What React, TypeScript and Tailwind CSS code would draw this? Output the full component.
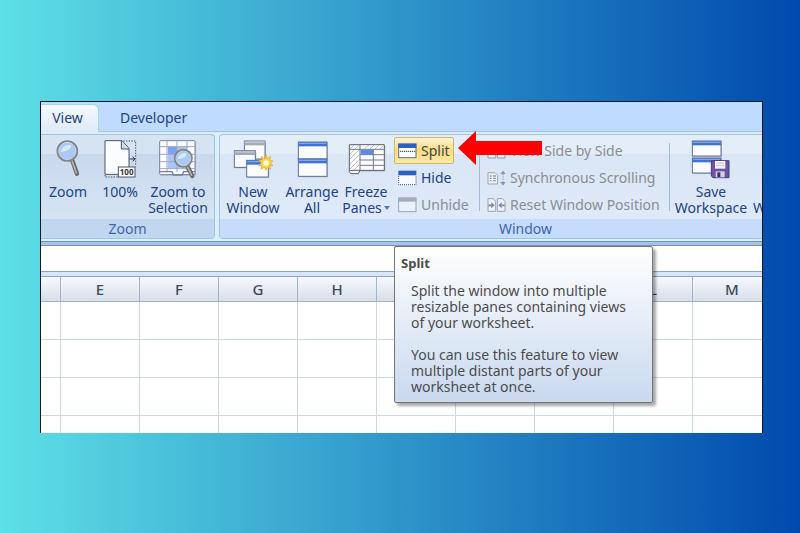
import React from 'react';

const columns = ['', 'E', 'F', 'G', 'H', 'I', 'J', 'K', 'L', 'M'];
const rows = [21, 22, 23, 24];

/* ---------- Icons ---------- */

function Lens({ cx, cy, r, hx, hy }: { cx: number; cy: number; r: number; hx: number; hy: number }) {
  const sx = cx + r * 0.5;
  const sy = cy + r * 0.95;
  return (
    <g>
      <line x1={sx} y1={sy} x2={hx} y2={hy} stroke="#6b6a6c" strokeWidth="13" strokeLinecap="round" />
      <line x1={sx - 1} y1={sy} x2={hx - 2} y2={hy - 2} stroke="#b5b2b0" strokeWidth="5" strokeLinecap="round" />
      <circle cx={cx} cy={cy} r={r} fill="#a9cbf3" stroke="#7f848e" strokeWidth="7" />
      <circle cx={cx} cy={cy} r={r - 3} fill="none" stroke="#cfd5de" strokeWidth="3" />
      <path
        d={`M${cx - r * 0.7} ${cy + r * 0.1} Q${cx - r * 0.5} ${cy - r * 0.7} ${cx + r * 0.4} ${cy - r * 0.6} Q${cx + r * 0.4} ${cy} ${cx - r * 0.7} ${cy + r * 0.1}Z`}
        fill="#d9e9fb"
      />
    </g>
  );
}

function Pane({ x, y, w, h, color = '#3f74d1', bar = 13 }: { x: number; y: number; w: number; h: number; color?: string; bar?: number }) {
  return (
    <g>
      <rect x={x + 3} y={y + 3} width={w} height={h} fill="#8f9bb0" opacity="0.5" />
      <rect x={x} y={y} width={w} height={h} fill="#fbfcff" stroke="#5f6f8c" strokeWidth="3" />
      <rect x={x} y={y} width={w} height={bar} fill={color} />
      <rect x={x + 2} y={y + 2} width={w - 4} height="4" fill="#ffffff" opacity="0.35" />
    </g>
  );
}

function BigIcon({ children }: { children: React.ReactNode }) {
  return (
    <svg viewBox="0 0 120 120" className="h-10 w-10 shrink-0" aria-hidden="true">
      {children}
    </svg>
  );
}

function ZoomIcon() {
  return (
    <BigIcon>
      <Lens cx={58} cy={36} r={29} hx={87} hy={104} />
    </BigIcon>
  );
}

function HundredIcon() {
  return (
    <BigIcon>
      <path d="M15 5H66L87 28V106H15Z" fill="#fbfcff" stroke="#4d5563" strokeWidth="3" />
      <path d="M64 5V30H87" fill="#cfd9e8" stroke="#4d5563" strokeWidth="3" />
      <path d="M70 6H107V82M15 108V114H55" fill="none" stroke="#47505f" strokeWidth="3" strokeDasharray="4 4" />
      <path d="M88 60H104M98 53L105 60L98 67" fill="none" stroke="#333b49" strokeWidth="3" />
      <rect x="55" y="84" width="50" height="30" fill="#ffffff" stroke="#4d5563" strokeWidth="3" />
      <text x="80" y="108" textAnchor="middle" fontSize="24" fontWeight="700" fill="#333333" fontFamily="Noto Sans, sans-serif">
        100
      </text>
    </BigIcon>
  );
}

function ZoomSelectionIcon() {
  return (
    <BigIcon>
      <rect x="8" y="8" width="106" height="102" fill="#8f9bb0" opacity="0.5" />
      <rect x="5" y="5" width="106" height="102" rx="3" fill="#fdfdff" stroke="#77829a" strokeWidth="3" />
      <rect x="30" y="23" width="57" height="66" fill="#a9c5f5" />
      <rect x="30" y="23" width="27" height="22" fill="#7fa3ea" />
      <path d="M27 5V100M57 5V100M87 5V100M5 23H111M5 46H111M5 68H111M5 89H111" stroke="#97a9cb" strokeWidth="3" />
      <path d="M5 98H42L47 108H72L77 98H111" fill="none" stroke="#77829a" strokeWidth="4" />
      <Lens cx={76} cy={58} r={25} hx={103} hy={111} />
    </BigIcon>
  );
}

function NewWindowIcon() {
  return (
    <BigIcon>
      <Pane x={34} y={6} w={62} h={54} color="#a3abb9" />
      <Pane x={4} y={35} w={63} h={50} color="#a3abb9" />
      <Pane x={41} y={64} w={65} h={50} />
      <path
        d="M99 47L103 60L112 52L110 64L120 66L112 72L120 80L110 80L113 91L103 84L99 94L94 84L84 91L87 80L77 80L85 72L77 63L88 63L85 52L95 60Z"
        fill="#fdd94a"
        stroke="#e0a21b"
        strokeWidth="2"
      />
      <circle cx="99" cy="72" r="8" fill="#fffbe0" />
    </BigIcon>
  );
}

function ArrangeIcon() {
  return (
    <BigIcon>
      <Pane x={19} y={9} w={86} h={51} />
      <Pane x={19} y={60} w={86} h={52} />
    </BigIcon>
  );
}

function FreezeIcon() {
  return (
    <BigIcon>
      <rect x="12" y="20" width="106" height="78" fill="#8f9bb0" opacity="0.5" />
      <path d="M10 17H115V94H42L37 104H14L10 98Z" fill="#fdfdff" stroke="#59616e" strokeWidth="3" />
      <path
        d="M12 30L24 18M12 45L39 18M12 60L42 30M12 75L41 46M12 90L41 61M20 97L41 76M55 30L69 18M72 30L84 18M87 30L99 18M102 30L113 19"
        stroke="#9aa2b1"
        strokeWidth="2"
      />
      <path d="M42 31H115M42 47H115M42 63H115M42 79H115M42 17V94M82 31V94M10 31H42" stroke="#727b8b" strokeWidth="3" />
      <rect x="44" y="33" width="37" height="14" fill="#5f8ae0" />
      <path d="M12 94H42" stroke="#59616e" strokeWidth="3" />
    </BigIcon>
  );
}

function SaveWorkspaceIcon() {
  return (
    <BigIcon>
      <Pane x={4} y={6} w={86} h={45} />
      <Pane x={4} y={57} w={86} h={45} />
      <path d="M61 65H114V116H66L61 111Z" fill="#6c549f" stroke="#4a3a78" strokeWidth="3" />
      <rect x="72" y="66" width="31" height="23" fill="#f3f2fa" />
      <path d="M76 73H99M76 80H99" stroke="#b3abcf" strokeWidth="2" />
      <rect x="74" y="97" width="27" height="18" fill="#d6d0e8" />
      <rect x="79" y="100" width="9" height="14" fill="#3d3163" />
    </BigIcon>
  );
}

function SmallIcon({ children }: { children: React.ReactNode }) {
  return (
    <svg viewBox="0 0 57 48" className="h-4 w-[19px] shrink-0" aria-hidden="true">
      {children}
    </svg>
  );
}

function SplitIcon() {
  return (
    <SmallIcon>
      <rect x="2" y="3" width="52" height="41" fill="#fdfdff" stroke="#5d6f92" strokeWidth="3" />
      <rect x="1" y="2" width="54" height="13" fill="#2f5fc4" />
      <path d="M6 25H52" stroke="#33415f" strokeWidth="3" strokeDasharray="4 2" />
    </SmallIcon>
  );
}

function HideIcon() {
  return (
    <SmallIcon>
      <rect x="2" y="3" width="52" height="41" fill="#f8faff" />
      <rect x="1" y="2" width="54" height="14" fill="#2f5fc4" />
      <path d="M2 18V44H54V18" fill="none" stroke="#4c5465" strokeWidth="3" strokeDasharray="3 3" />
    </SmallIcon>
  );
}

function UnhideIcon() {
  return (
    <SmallIcon>
      <rect x="2" y="3" width="52" height="41" fill="#eaf0f8" stroke="#9aa5b6" strokeWidth="3" />
      <rect x="1" y="2" width="54" height="12" fill="#a2adbe" />
    </SmallIcon>
  );
}

function SideBySideIcon() {
  return (
    <SmallIcon>
      <path d="M3 4H26V45H3ZM31 4H54V45H31Z" fill="#eef2f8" stroke="#9099a8" strokeWidth="3" />
      <path d="M8 16H21M8 24H21M8 32H21M36 16H49M36 24H49M36 32H49" stroke="#a7afbc" strokeWidth="3" />
    </SmallIcon>
  );
}

function SyncScrollIcon() {
  return (
    <SmallIcon>
      <path d="M3 8H24L32 16V42H3Z" fill="#eef2f8" stroke="#9aa3b2" strokeWidth="3" />
      <path d="M8 18H14M18 18H27M8 25H14M18 25H27M8 32H14M18 32H27" stroke="#949dac" strokeWidth="4" />
      <path d="M48 12V38" stroke="#8b94a4" strokeWidth="3" strokeDasharray="4 3" />
      <path d="M40 12L48 2L56 12ZM40 36L48 47L56 36Z" fill="#8b94a4" />
    </SmallIcon>
  );
}

function ResetPositionIcon() {
  return (
    <SmallIcon>
      <path d="M3 5H18L26 13V43H3ZM31 5H46L54 13V43H31Z" fill="#eef2f8" stroke="#9aa3b2" strokeWidth="3" />
      <path d="M4 25H14M53 25H43" stroke="#7f8898" strokeWidth="5" />
      <path d="M13 16L23 25L13 34ZM44 16L34 25L44 34Z" fill="#7f8898" />
    </SmallIcon>
  );
}

/* ---------- Ribbon parts ---------- */

function BigButton({ icon, lines, width, caret }: { icon: React.ReactNode; lines: string[]; width: string; caret?: boolean }) {
  return (
    <button type="button" className={`flex shrink-0 flex-col items-center pt-0.5 whitespace-nowrap text-[#23437f] ${width}`}>
      {icon}
      <span className="mt-[5px] flex flex-col items-center">
        {lines.map((line, i) => (
          <span key={line} className="flex items-center gap-0.5">
            {line}
            {caret && i === lines.length - 1 && (
              <svg viewBox="0 0 6 4" className="h-1 w-1.5" aria-hidden="true">
                <path d="M0 0H6L3 4Z" fill="#5877ab" />
              </svg>
            )}
          </span>
        ))}
      </span>
    </button>
  );
}

function SmallButton({ icon, label, active, disabled }: { icon: React.ReactNode; label: string; active?: boolean; disabled?: boolean }) {
  return (
    <button
      type="button"
      disabled={disabled}
      className={`flex h-[27px] items-center gap-1 whitespace-nowrap rounded-xs border px-[3px] ${
        active
          ? 'border-[#cdb679] bg-linear-to-b from-[#fdf3d0] via-[#fbdb7c] to-[#fdeaa0] text-[#3d475f]'
          : 'border-transparent'
      } ${disabled ? 'text-[#8b8d91]' : ''} ${!active && !disabled ? 'text-[#23437f]' : ''}`}
    >
      {icon}
      {label}
    </button>
  );
}

function Group({ title, className, titleClass, children }: { title: string; className: string; titleClass: string; children: React.ReactNode }) {
  return (
    <section aria-label={title} className={`flex flex-col rounded-sm border border-[#a5c3df] ${className}`}>
      <div className="flex h-[84px] pt-0.5">{children}</div>
      <h2 className={`h-[19px] text-center leading-5 text-[#4067a8] ${titleClass}`}>{title}</h2>
    </section>
  );
}

function SplitTooltip() {
  return (
    <div
      role="tooltip"
      className="absolute top-[109px] left-0 z-10 h-[157px] w-[259px] rounded-xs border border-[#767676] bg-linear-to-b from-white to-[#c9d9ef] px-1.5 pt-2 text-[#4c4c4e] shadow-[3px_3px_3px_rgba(0,0,0,0.35)]"
    >
      <strong className="block text-[13px] leading-4 font-bold">Split</strong>
      <p className="mt-3 pl-2.5 whitespace-nowrap">
        Split the window into multiple
        <br />
        resizable panes containing views
        <br />
        of your worksheet.
      </p>
      <p className="mt-4 pl-2.5 whitespace-nowrap">
        You can use this feature to view
        <br />
        multiple distant parts of your
        <br />
        worksheet at once.
      </p>
    </div>
  );
}

function RedArrow() {
  return (
    <svg viewBox="0 0 84 34" className="absolute top-[-6px] left-16 z-10 h-[34px] w-[84px]" aria-hidden="true">
      <path d="M0 17L18 0V10H84V24H18V34Z" fill="#fe0000" />
    </svg>
  );
}

function Divider() {
  return <div className="mt-1.5 h-[68px] w-px shrink-0 bg-[#a3bad9]" />;
}

function Ribbon() {
  return (
    <div className="flex h-[110px] gap-1 border-t border-[#a3c0e4] bg-[#d9f0fb] pt-0.5 pb-0.5">
      <Group
        title="Zoom"
        className="w-[174px] shrink-0 rounded-l-none border-l-0 bg-linear-to-b from-[#d6e3f2] from-18% via-[#c9d9ec] via-18% to-[#d9e7f7]"
        titleClass="bg-[#c1d7f0]"
      >
        <BigButton icon={<ZoomIcon />} lines={['Zoom']} width="w-[54px]" />
        <BigButton icon={<HundredIcon />} lines={['100%']} width="w-[50px]" />
        <BigButton icon={<ZoomSelectionIcon />} lines={['Zoom to', 'Selection']} width="w-[66px]" />
      </Group>
      <Group
        title="Window"
        className="min-w-0 flex-1 rounded-r-none border-r-0 bg-linear-to-b from-[#e4eef9] from-18% via-[#d9e6f5] via-18% to-[#e0ebfa]"
        titleClass="bg-[#c5dcfd] pl-[69px]"
      >
        <div className="flex gap-px pl-1">
          <BigButton icon={<NewWindowIcon />} lines={['New', 'Window']} width="w-[58px]" />
          <BigButton icon={<ArrangeIcon />} lines={['Arrange', 'All']} width="w-[58px]" />
          <BigButton icon={<FreezeIcon />} lines={['Freeze', 'Panes']} width="w-12" caret />
        </div>
        <div className="relative ml-1 flex w-[85px] shrink-0 flex-col items-start">
          <SmallButton icon={<SplitIcon />} label="Split" active />
          <SmallButton icon={<HideIcon />} label="Hide" />
          <SmallButton icon={<UnhideIcon />} label="Unhide" disabled />
          <RedArrow />
          <SplitTooltip />
        </div>
        <Divider />
        <div className="ml-[3px] flex w-[186px] shrink-0 flex-col items-start">
          <SmallButton icon={<SideBySideIcon />} label="View Side by Side" disabled />
          <SmallButton icon={<SyncScrollIcon />} label="Synchronous Scrolling" disabled />
          <SmallButton icon={<ResetPositionIcon />} label="Reset Window Position" disabled />
        </div>
        <Divider />
        <BigButton icon={<SaveWorkspaceIcon />} lines={['Save', 'Workspace']} width="w-[82px]" />
        <BigButton icon={<ArrangeIcon />} lines={['Switch', 'Windows']} width="w-[70px]" caret />
      </Group>
    </div>
  );
}

function Sheet() {
  return (
    <div className="overflow-hidden">
      <table className="w-[731px] table-fixed border-separate border-spacing-0 bg-white">
        <colgroup>
          {columns.map((name) => (
            <col key={name} className={name ? 'w-[79px]' : 'w-5'} />
          ))}
        </colgroup>
        <thead>
          <tr className="h-[25px] bg-linear-to-b from-[#f7f9fc] to-[#d6deea]">
            {columns.map((name) => (
              <th
                key={name}
                className="border-r border-b border-[#9eb6ce] p-0 text-[15px] leading-6 font-medium text-[#3c4c55]"
              >
                {name}
              </th>
            ))}
          </tr>
        </thead>
        <tbody>
          {rows.map((row) => (
            <tr key={row} className="h-[38px] last:h-[17px]">
              {columns.map((name) => (
                <td key={name} className="border-r border-b border-[#d0d7e5] p-0 [tr:last-child>&]:border-b-0" />
              ))}
            </tr>
          ))}
        </tbody>
      </table>
    </div>
  );
}

export default function App() {
  return (
    <main className="min-h-screen bg-linear-to-r/srgb from-[#5de0e6] to-[#004aad] pt-[101px] pr-[37px] pl-10">
      <div className="overflow-hidden border border-b-0 border-[#0b1624] bg-white font-['Noto_Sans',sans-serif] text-sm leading-4">
        <nav className="flex h-[29px] items-end bg-[#bfdbff]">
          <a
            href="#view"
            className="relative -mb-px flex h-7 w-[58px] items-center justify-center rounded-tr-md border-t border-r border-[#a5d3f0] bg-linear-to-b from-[#f4f9ff] to-[#dfeaf8] pr-1 pb-px text-[#23437f]"
          >
            View
          </a>
          <a href="#developer" className="-mb-px flex h-7 items-center px-[21px] text-[#23437f]">
            Developer
          </a>
        </nav>
        <Ribbon />
        <div className="h-[5px] border-y border-[#7394bd] bg-[#a9c4e2]" />
        <input aria-label="Formula" className="block h-[25px] w-full bg-white px-2 outline-none" />
        <div className="h-1.5 border-y border-[#8ba6ca] bg-[#d9e6f7]" />
        <Sheet />
      </div>
    </main>
  );
}
